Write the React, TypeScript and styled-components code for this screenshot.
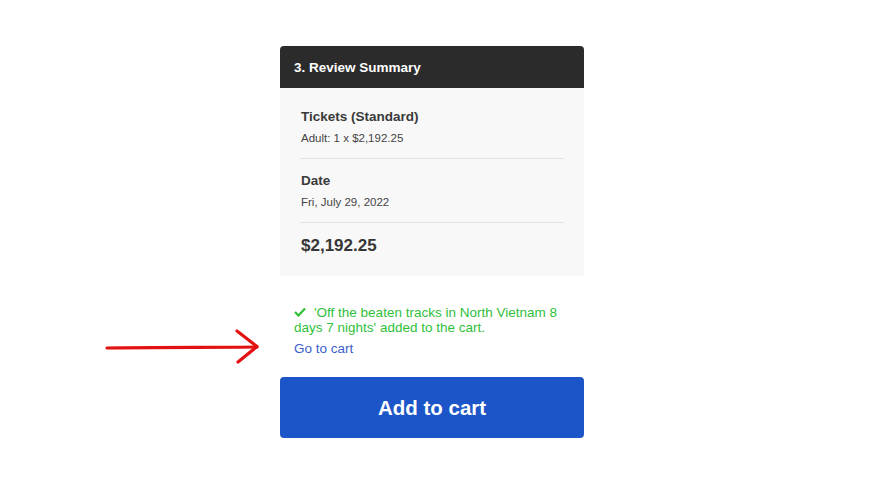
import React from "react";
import styled, { createGlobalStyle } from "styled-components";

const Global = createGlobalStyle`
  html, body { margin: 0; padding: 0; background: #ffffff; }
  body { font-family: "Liberation Sans", Arial, sans-serif; }
`;

const Page = styled.div`
  position: relative;
  width: 870px;
  height: 490px;
  overflow: hidden;
  background: #ffffff;
`;

const Column = styled.div`
  width: 304px;
  margin-left: 280px;
  padding-top: 46px;
  display: flex;
  flex-direction: column;
`;

const Card = styled.section`
  display: flex;
  flex-direction: column;
  background: #f8f8f8;
`;

const CardHeader = styled.header`
  height: 42px;
  display: flex;
  align-items: center;
  padding: 0 14px;
  background: #2b2b2b;
  border-radius: 4px 4px 0 0;
  color: #ffffff;
  font-weight: 700;
  font-size: 13.5px;
`;

const CardBody = styled.div`
  padding: 7px 20px 20px;
  display: flex;
  flex-direction: column;
`;

const Row = styled.div<{ $divider?: boolean }>`
  padding: 13px 1px 12px;
  border-bottom: ${(p) => (p.$divider ? "1px solid #e2e2e2" : "none")};
  display: flex;
  flex-direction: column;
  gap: 4px;
`;

const LastRow = styled(Row)`
  padding-bottom: 0;
`;

const RowTitle = styled.div`
  font-size: 13.5px;
  line-height: 18px;
  font-weight: 700;
  color: #3a3a3a;
`;

const RowSub = styled.div`
  font-size: 11.5px;
  line-height: 16px;
  color: #444444;
`;

const Price = styled.div`
  font-size: 17px;
  line-height: 20px;
  font-weight: 700;
  color: #363636;
`;

const Notice = styled.div`
  margin-top: 29px;
  padding: 0 20px 0 14px;
  display: flex;
  flex-direction: column;
  gap: 6px;
`;

const Added = styled.p`
  margin: 0;
  font-size: 13.5px;
  line-height: 15px;
  color: #2fbf3a;
`;

const CheckMark = styled.svg`
  width: 12px;
  height: 10px;
  margin-right: 8px;
  vertical-align: 0px;
`;

const CartLink = styled.a`
  font-size: 13.5px;
  line-height: 16px;
  color: #3a5fcc;
  text-decoration: none;
  align-self: flex-start;
`;

const AddButton = styled.button`
  margin-top: 20px;
  height: 61px;
  width: 100%;
  border: none;
  border-radius: 4px;
  background: #1c55c8;
  color: #ffffff;
  font-family: "Liberation Sans", Arial, sans-serif;
  font-weight: 700;
  font-size: 20.5px;
  cursor: pointer;
`;

const Annotation = styled.svg`
  position: absolute;
  left: 100px;
  top: 325px;
  width: 165px;
  height: 45px;
  overflow: visible;
`;

export default function App() {
  return (
    <Page>
      <Global />
      <Column>
        <Card>
          <CardHeader>3. Review Summary</CardHeader>
          <CardBody>
            <Row $divider>
              <RowTitle>Tickets (Standard)</RowTitle>
              <RowSub>Adult: 1 x $2,192.25</RowSub>
            </Row>
            <Row $divider>
              <RowTitle>Date</RowTitle>
              <RowSub>Fri, July 29, 2022</RowSub>
            </Row>
            <LastRow>
              <Price>$2,192.25</Price>
            </LastRow>
          </CardBody>
        </Card>
        <Notice>
          <Added>
            <CheckMark viewBox="0 0 12 10">
              <polyline
                points="1,5 4.5,8.5 11,1.5"
                fill="none"
                stroke="#2fbf3a"
                strokeWidth="2.2"
              />
            </CheckMark>
            'Off the beaten tracks in North Vietnam 8 days 7 nights' added to the cart.
          </Added>
          <CartLink href="#">Go to cart</CartLink>
        </Notice>
        <AddButton>Add to cart</AddButton>
      </Column>
      <Annotation viewBox="0 0 165 45">
        <path
          d="M7 23 C 50 22, 110 22.5, 157 22"
          fill="none"
          stroke="#e31212"
          strokeWidth="3.2"
          strokeLinecap="round"
        />
        <path
          d="M137 6 L 157 21.5 L 138 37"
          fill="none"
          stroke="#e31212"
          strokeWidth="3.2"
          strokeLinecap="round"
          strokeLinejoin="round"
        />
      </Annotation>
    </Page>
  );
}
